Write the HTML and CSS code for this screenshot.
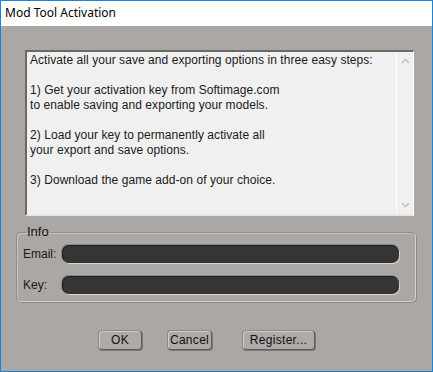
FILE: index.html
```html
<!DOCTYPE html>
<html>
<head>
<meta charset="utf-8">
<title>Mod Tool Activation</title>
<link rel="stylesheet" href="styles.css">
</head>
<body>
<div class="window">
  <div class="titlebar">Mod Tool Activation</div>
  <div class="client">
    <div class="textbox">
      <div class="textbox-content">
        <p>Activate all your save and exporting options in three easy steps:</p>
        <p>1) Get your activation key from Softimage.com<br>to enable saving and exporting your models.</p>
        <p>2) Load your key to permanently activate all<br>your export and save options.</p>
        <p>3) Download the game add-on of your choice.</p>
      </div>
      <div class="scrollbar">
        <svg class="chev" width="9" height="6" viewBox="0 0 9 6"><path d="M1 5 L4.5 1.5 L8 5" fill="none" stroke="#c3c3c3" stroke-width="1.6"/></svg>
        <svg class="chev" width="9" height="6" viewBox="0 0 9 6"><path d="M1 1 L4.5 4.5 L8 1" fill="none" stroke="#c3c3c3" stroke-width="1.6"/></svg>
      </div>
    </div>
    <fieldset class="group">
      <legend class="group-label">Info</legend>
      <div class="row">
        <span class="label">Email:</span>
        <div class="field"></div>
      </div>
      <div class="row">
        <span class="label">Key:</span>
        <div class="field"></div>
      </div>
    </fieldset>
    <div class="buttons">
      <button class="btn btn-ok">OK</button>
      <button class="btn btn-cancel">Cancel</button>
      <button class="btn btn-register">Register...</button>
    </div>
  </div>
</div>
</body>
</html>
```

FILE: styles.css
```css
html, body {
  margin: 0;
  padding: 0;
  background: #aba7a4;
}
.window {
  width: 433px;
  height: 372px;
  box-sizing: border-box;
  border: 1px solid #1883d7;
  display: flex;
  flex-direction: column;
  background: #aba7a4;
}
.titlebar {
  height: 25px;
  background: #ffffff;
  font-family: "Noto Sans", sans-serif;
  font-size: 12px;
  color: #000;
  padding-left: 4px;
  line-height: 23px;
  flex: none;
}
.client {
  flex: 1;
  display: flex;
  flex-direction: column;
  font-family: "Liberation Sans", Arial, sans-serif;
  font-size: 12px;
  color: #1a1a1a;
}
.textbox {
  margin: 24px 0 0 24px;
  width: 389px;
  height: 166px;
  box-sizing: border-box;
  background: #f0f0f0;
  border-top: 2px solid #6b6866;
  border-left: 2px solid #6b6866;
  border-right: 1px solid #ffffff;
  border-bottom: 2px solid #e6e6e6;
  display: flex;
}
.textbox-content {
  flex: 1;
  padding: 1px 0 0 3px;
  line-height: 15px;
  letter-spacing: 0.06px;
}
.textbox-content p {
  margin: 0 0 15px 0;
}
.scrollbar {
  width: 16px;
  border-left: 1px solid #ffffff;
  display: flex;
  flex-direction: column;
  justify-content: space-between;
  align-items: center;
  padding: 6px 0 6px 0;
}
.group {
  margin: 10px 0 0 15px;
  width: 400px;
  height: 76px;
  box-sizing: border-box;
  border: 1px solid #8e8a87;
  border-right-color: #d2cfcc;
  border-bottom-color: #d2cfcc;
  border-radius: 5px;
  box-shadow: inset 1px 1px 0 #c8c5c2, 1px 1px 0 #8e8a87;
  padding: 0 16px 0 6px;
  display: flex;
  flex-direction: column;
  gap: 13px;
}
.group-label {
  padding: 0 1px;
  margin-left: 3px;
  font-size: 13px;
  line-height: 12px;
  color: #111;
}
.row {
  display: flex;
  align-items: center;
  height: 18px;
}
.row:first-of-type {
  margin-top: 7px;
}
.label {
  width: 39px;
  flex: none;
  color: #1a1a1a;
}
.field {
  flex: 1;
  height: 18px;
  box-sizing: border-box;
  background: #353535;
  border-radius: 7px;
  border-top: 1px solid #1e1e1e;
  border-left: 1px solid #1e1e1e;
  box-shadow: 1px 1px 0 #d6d3d0, -1px -1px 0 #8a8784;
}
.buttons {
  margin: 28px 0 0 97px;
  display: flex;
}
.btn {
  height: 20px;
  box-sizing: border-box;
  background: #aeaaa7;
  border: 1px solid #8d8986;
  border-right-color: #5f5c5a;
  border-bottom-color: #5f5c5a;
  border-radius: 4px;
  box-shadow: inset 1px 1px 0 #d0cdca, 1px 1px 0 #7a7775;
  font-family: "Liberation Sans", Arial, sans-serif;
  font-size: 12px;
  letter-spacing: 0.3px;
  color: #111;
  padding: 0;
}
.btn-ok { width: 44px; }
.btn-cancel { width: 45px; margin-left: 25px; }
.btn-register { width: 73px; margin-left: 30px; }
```
